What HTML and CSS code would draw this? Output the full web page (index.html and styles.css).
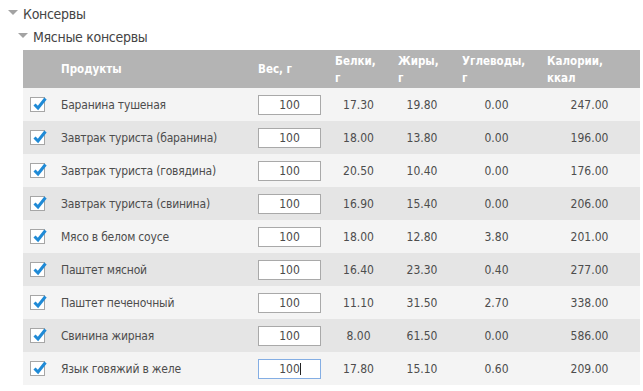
FILE: index.html
```html
<!DOCTYPE html>
<html lang="ru">
<head>
<meta charset="utf-8">
<title>Консервы</title>
<link rel="stylesheet" href="styles.css">
</head>
<body>
<div class="tree">
  <div class="node level1"><span class="tri"></span><span class="label">Консервы</span></div>
  <div class="node level2"><span class="tri"></span><span class="label">Мясные консервы</span></div>
  <table class="grid">
    <colgroup>
      <col class="c-check"><col class="c-name"><col class="c-weight"><col class="c-prot"><col class="c-fat"><col class="c-carb"><col class="c-cal">
    </colgroup>
    <thead>
      <tr>
        <th></th>
        <th>Продукты</th>
        <th>Вес, г</th>
        <th>Белки,<br>г</th>
        <th>Жиры,<br>г</th>
        <th>Углеводы,<br>г</th>
        <th>Калории,<br>ккал</th>
      </tr>
    </thead>
    <tbody>
      <tr><td class="chk"><span class="box"><svg viewBox="0 0 17 17" width="17" height="17"><path d="M3.5 8.5 L7 12 L14.5 2.5" fill="none" stroke="#1f8ad6" stroke-width="3" stroke-linejoin="miter"/></svg></span></td><td class="name">Баранина тушеная</td><td class="w"><input class="qty" value="100"></td><td class="num">17.30</td><td class="num">19.80</td><td class="num">0.00</td><td class="num">247.00</td></tr>
      <tr><td class="chk"><span class="box"><svg viewBox="0 0 17 17" width="17" height="17"><path d="M3.5 8.5 L7 12 L14.5 2.5" fill="none" stroke="#1f8ad6" stroke-width="3" stroke-linejoin="miter"/></svg></span></td><td class="name">Завтрак туриста (баранина)</td><td class="w"><input class="qty" value="100"></td><td class="num">18.00</td><td class="num">13.80</td><td class="num">0.00</td><td class="num">196.00</td></tr>
      <tr><td class="chk"><span class="box"><svg viewBox="0 0 17 17" width="17" height="17"><path d="M3.5 8.5 L7 12 L14.5 2.5" fill="none" stroke="#1f8ad6" stroke-width="3" stroke-linejoin="miter"/></svg></span></td><td class="name">Завтрак туриста (говядина)</td><td class="w"><input class="qty" value="100"></td><td class="num">20.50</td><td class="num">10.40</td><td class="num">0.00</td><td class="num">176.00</td></tr>
      <tr><td class="chk"><span class="box"><svg viewBox="0 0 17 17" width="17" height="17"><path d="M3.5 8.5 L7 12 L14.5 2.5" fill="none" stroke="#1f8ad6" stroke-width="3" stroke-linejoin="miter"/></svg></span></td><td class="name">Завтрак туриста (свинина)</td><td class="w"><input class="qty" value="100"></td><td class="num">16.90</td><td class="num">15.40</td><td class="num">0.00</td><td class="num">206.00</td></tr>
      <tr><td class="chk"><span class="box"><svg viewBox="0 0 17 17" width="17" height="17"><path d="M3.5 8.5 L7 12 L14.5 2.5" fill="none" stroke="#1f8ad6" stroke-width="3" stroke-linejoin="miter"/></svg></span></td><td class="name">Мясо в белом соусе</td><td class="w"><input class="qty" value="100"></td><td class="num">18.00</td><td class="num">12.80</td><td class="num">3.80</td><td class="num">201.00</td></tr>
      <tr><td class="chk"><span class="box"><svg viewBox="0 0 17 17" width="17" height="17"><path d="M3.5 8.5 L7 12 L14.5 2.5" fill="none" stroke="#1f8ad6" stroke-width="3" stroke-linejoin="miter"/></svg></span></td><td class="name">Паштет мясной</td><td class="w"><input class="qty" value="100"></td><td class="num">16.40</td><td class="num">23.30</td><td class="num">0.40</td><td class="num">277.00</td></tr>
      <tr><td class="chk"><span class="box"><svg viewBox="0 0 17 17" width="17" height="17"><path d="M3.5 8.5 L7 12 L14.5 2.5" fill="none" stroke="#1f8ad6" stroke-width="3" stroke-linejoin="miter"/></svg></span></td><td class="name">Паштет печеночный</td><td class="w"><input class="qty" value="100"></td><td class="num">11.10</td><td class="num">31.50</td><td class="num">2.70</td><td class="num">338.00</td></tr>
      <tr><td class="chk"><span class="box"><svg viewBox="0 0 17 17" width="17" height="17"><path d="M3.5 8.5 L7 12 L14.5 2.5" fill="none" stroke="#1f8ad6" stroke-width="3" stroke-linejoin="miter"/></svg></span></td><td class="name">Свинина жирная</td><td class="w"><input class="qty" value="100"></td><td class="num">8.00</td><td class="num">61.50</td><td class="num">0.00</td><td class="num">586.00</td></tr>
      <tr><td class="chk"><span class="box"><svg viewBox="0 0 17 17" width="17" height="17"><path d="M3.5 8.5 L7 12 L14.5 2.5" fill="none" stroke="#1f8ad6" stroke-width="3" stroke-linejoin="miter"/></svg></span></td><td class="name">Язык говяжий в желе</td><td class="w"><span class="focus-wrap"><input class="qty focused" value="100"></span></td><td class="num">17.80</td><td class="num">15.10</td><td class="num">0.60</td><td class="num">209.00</td></tr>
    </tbody>
  </table>
</div>
</body>
</html>
```

FILE: styles.css
```css
html, body {
  margin: 0;
  padding: 0;
  background: #ffffff;
}

body {
  font-family: "DejaVu Sans Condensed", "DejaVu Sans", sans-serif;
  color: #474747;
}

.tree {
  padding-top: 2px;
}

.node {
  display: flex;
  align-items: center;
  height: 23px;
  font-size: 14px;
  letter-spacing: -0.3px;
  color: #454545;
}

.level1 {
  padding-left: 8px;
}

.level2 {
  padding-left: 18px;
}

.tri {
  width: 0;
  height: 0;
  border-left: 5.5px solid transparent;
  border-right: 5.5px solid transparent;
  border-top: 5px solid #a3a3a3;
  margin-right: 5px;
  margin-top: -2px;
}

.grid {
  margin: 2px 0 0 23px;
  width: 617px;
  table-layout: fixed;
  border-collapse: collapse;
  border-spacing: 0;
  font-size: 12px;
}

.c-check { width: 30px; }
.c-name { width: 197px; }
.c-weight { width: 77px; }
.c-prot { width: 63px; }
.c-fat { width: 64px; }
.c-carb { width: 85px; }
.c-cal { width: 101px; }

.grid thead tr {
  background: #b4b4b4;
  height: 38px;
}

.grid th {
  color: #ffffff;
  font-size: 11.5px;
  font-weight: bold;
  text-align: left;
  line-height: 17px;
  padding: 1px 2px 0 8px;
  vertical-align: middle;
}

.grid tbody tr {
  height: 33px;
}

.grid tbody tr:nth-child(odd) {
  background: #f4f4f4;
}

.grid tbody tr:nth-child(even) {
  background: #e5e5e5;
}

.grid td {
  padding: 0;
  vertical-align: middle;
}

.chk {
  padding-left: 7px !important;
}

.box {
  position: relative;
  display: block;
  width: 15px;
  height: 15px;
  box-sizing: border-box;
  border: 1px solid #a6a6a6;
  background: #ffffff;
}

.box svg {
  position: absolute;
  left: 0;
  top: -2px;
}

.name {
  padding-left: 8px !important;
  color: #4d4d4d;
  letter-spacing: -0.2px;
  white-space: nowrap;
}

.w {
  padding-left: 8px !important;
}

.qty {
  display: block;
  box-sizing: border-box;
  width: 63px;
  height: 20px;
  margin: 0;
  padding: 0;
  border: 1px solid #a9a9a9;
  background: #ffffff;
  font-family: "DejaVu Sans Condensed", "DejaVu Sans", sans-serif;
  font-size: 12px;
  color: #4a4a4a;
  text-align: center;
  outline: none;
}

.qty.focused {
  border-color: #84aee4;
}

.focus-wrap {
  position: relative;
  display: block;
  width: 63px;
}

.focus-wrap::after {
  content: "";
  position: absolute;
  left: 42px;
  top: 4px;
  width: 1px;
  height: 12px;
  background: #222222;
}

.num {
  text-align: center;
  color: #4d4d4d;
}
```
